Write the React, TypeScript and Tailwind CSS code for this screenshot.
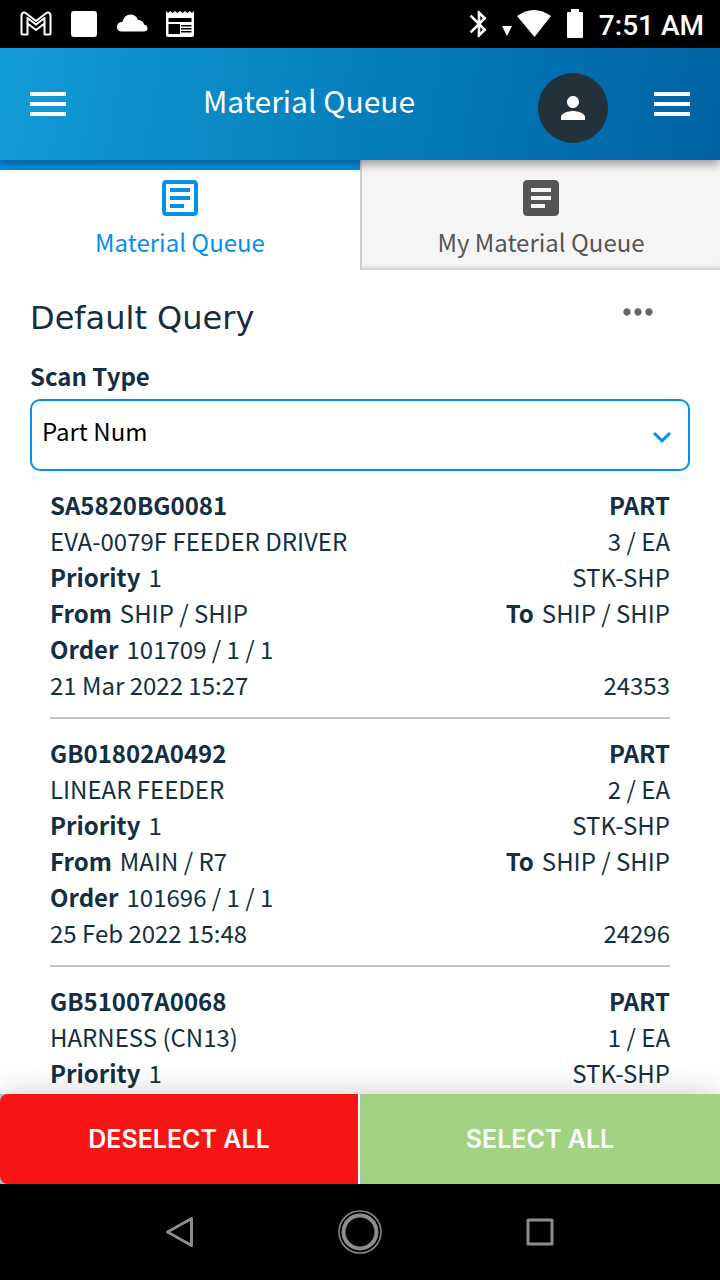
import { useState } from "react";
import {
  MdArticle,
  MdBluetooth,
  MdExpandMore,
  MdMenu,
  MdMoreHoriz,
  MdOutlineArticle,
  MdPerson,
} from "react-icons/md";

type QueueItem = {
  part: string;
  description: string;
  priority: number;
  kind: string;
  quantity: string;
  transaction: string;
  from?: string;
  to?: string;
  order?: string;
  date?: string;
  id?: string;
};

const ITEMS: QueueItem[] = [
  {
    part: "SA5820BG0081",
    description: "EVA-0079F FEEDER DRIVER",
    priority: 1,
    kind: "PART",
    quantity: "3 / EA",
    transaction: "STK-SHP",
    from: "SHIP / SHIP",
    to: "SHIP / SHIP",
    order: "101709 / 1 / 1",
    date: "21 Mar 2022 15:27",
    id: "24353",
  },
  {
    part: "GB01802A0492",
    description: "LINEAR FEEDER",
    priority: 1,
    kind: "PART",
    quantity: "2 / EA",
    transaction: "STK-SHP",
    from: "MAIN / R7",
    to: "SHIP / SHIP",
    order: "101696 / 1 / 1",
    date: "25 Feb 2022 15:48",
    id: "24296",
  },
  {
    part: "GB51007A0068",
    description: "HARNESS (CN13)",
    priority: 1,
    kind: "PART",
    quantity: "1 / EA",
    transaction: "STK-SHP",
  },
];

function StatusBar() {
  return (
    <div className="flex h-12 shrink-0 items-center bg-black px-4 text-white">
      <div className="flex flex-1 items-center gap-4 pl-1">
        <svg className="h-8 w-8" viewBox="0 0 32 32" fill="none" stroke="currentColor" strokeWidth="2" strokeLinejoin="round">
          <path d="M1.500 8Q1.500 4.500 4 4.500Q5 4.500 6 5.300L16 13L26 5.300Q27 4.500 28 4.500Q30.500 4.500 30.500 8V25Q30.500 26.500 29 26.500H24.500V15.500L16 22L7.500 15.500V26.500H3Q1.500 26.500 1.500 25Z" />
          <path d="M7.500 15.500V10L16 16.500L24.500 10V15.500" />
        </svg>
        <svg className="h-8 w-8" viewBox="0 0 32 32" fill="currentColor">
          <rect x="3" y="3" width="26" height="26" rx="3" />
        </svg>
        <svg className="h-8 w-8" viewBox="0 0 32 32" fill="currentColor">
          <path d="M5 23.500A4.700 4.700 0 0 1 1 18.500Q1 14.500 6.500 13.800Q8.500 6.500 14.500 6.500Q20 6.500 22 12Q27 12 28 16.500Q31.500 17 31.500 20.500Q31.500 23.500 28 23.500Z" />
        </svg>
        <svg className="h-8 w-8" viewBox="0 0 32 32">
          <path fill="currentColor" fillRule="evenodd" d="M2 3L4 5L6 3L8.500 5L11 3L13.500 5L16 3L18.500 5L21 3L23.500 5L26 3L28 5L30 3V27Q30 29 28 29H4Q2 29 2 27ZM4.500 10V14H27.500V10ZM4.500 16V26H16V16ZM17 17V18.500H27.500V17ZM17 20V21.500H27.500V20ZM17 23V24.500H27.500V23Z" />
        </svg>
      </div>
      <MdBluetooth className="mr-2 size-8" />
      <svg className="h-8 w-12 overflow-visible" viewBox="0 0 48 32" fill="currentColor">
        <path d="M-1 18H9L4 28Z" />
        <path d="M14 8Q31 -4 48 8L31.500 29Z" />
      </svg>
      <svg className="mx-3.5 h-8 w-5" viewBox="0 0 20 32" fill="currentColor">
        <path d="M6 1H14V4H17Q18 4 18 5V29Q18 30 17 30H3Q2 30 2 29V5Q2 4 3 4H6Z" />
      </svg>
      <span className="pt-1 font-[Roboto,sans-serif] text-[28px] leading-8 font-medium">7:51 AM</span>
    </div>
  );
}

function Header() {
  return (
    <header className="relative z-10 flex h-28 shrink-0 items-center bg-linear-100 from-[#129cd8] to-[#0062a3] px-6 text-white shadow-[0_4px_10px_rgba(0,0,0,0.4)]">
      <button type="button" aria-label="Open menu">
        <MdMenu className="size-12" />
      </button>
      <h1 className="flex-1 pb-2 pl-2 text-center text-[30px] leading-10">Material Queue</h1>
      <button
        type="button"
        aria-label="Account"
        className="mt-2 mr-10 flex size-[70px] items-center justify-center rounded-full bg-[#22313a]"
      >
        <MdPerson className="size-9" />
      </button>
      <button type="button" aria-label="More options">
        <MdMenu className="size-12" />
      </button>
    </header>
  );
}

function Row({ left, right }: { left: React.ReactNode; right?: React.ReactNode }) {
  return (
    <div className="flex h-9 items-center justify-between">
      <span>{left}</span>
      <span>{right}</span>
    </div>
  );
}

function Labelled({ label, value }: { label: string; value: string | number }) {
  return (
    <>
      <b className="mr-2">{label}</b>
      {value}
    </>
  );
}

function QueueCard({ item }: { item: QueueItem }) {
  return (
    <li className="border-b-2 border-[#c4c4c4] pt-4 pb-[14px]">
      <Row left={<b>{item.part}</b>} right={<b>{item.kind}</b>} />
      <Row left={item.description} right={item.quantity} />
      <Row left={<Labelled label="Priority" value={item.priority} />} right={item.transaction} />
      {item.from && item.to && (
        <Row left={<Labelled label="From" value={item.from} />} right={<Labelled label="To" value={item.to} />} />
      )}
      {item.order && <Row left={<Labelled label="Order" value={item.order} />} />}
      {item.date && <Row left={item.date} right={item.id} />}
    </li>
  );
}

export default function App() {
  const [tab, setTab] = useState("all");
  const [scanType, setScanType] = useState("part");

  const activeTab = "border-t-[10px] border-[#0390e8] bg-white pt-1 text-[#0390e8]";
  const idleTab = "border-l-2 border-[#d0d0d0] bg-[#f5f5f5] pt-[14px] text-[#555] shadow-[inset_0_-6px_4px_-4px_rgba(0,0,0,0.2)]";

  return (
    <div className="flex h-screen flex-col bg-white font-['Noto_Sans_CJK_SC','Noto_Sans',sans-serif] text-[24px] leading-9 text-[#132f41]">
      <StatusBar />
      <Header />

      <nav className="grid h-[110px] shrink-0 grid-cols-2">
        <button
          type="button"
          onClick={() => setTab("all")}
          className={`flex flex-col items-center ${tab === "all" ? activeTab : idleTab}`}
        >
          <MdOutlineArticle className="size-12 shrink-0" />
          <span className="leading-10">Material Queue</span>
        </button>
        <button
          type="button"
          onClick={() => setTab("mine")}
          className={`flex flex-col items-center ${tab === "mine" ? activeTab : idleTab}`}
        >
          <MdArticle className="size-12 shrink-0" />
          <span className="leading-10">My Material Queue</span>
        </button>
      </nav>

      <main className="min-h-0 flex-1 overflow-hidden px-[30px] pt-5">
        <div className="flex items-start justify-between pr-[30px]">
          <h2 className="pt-2 font-['DejaVu_Sans',sans-serif] text-[32px] leading-10">Default Query</h2>
          <button type="button" aria-label="Query options" className="text-[#666]">
            <MdMoreHoriz className="size-11" />
          </button>
        </div>

        <label htmlFor="scan-type" className="mt-5 block pb-[5px] font-bold">
          Scan Type
        </label>
        <div className="relative">
          <select
            id="scan-type"
            value={scanType}
            onChange={(e) => setScanType(e.target.value)}
            className="block h-[72px] w-full appearance-none rounded-[10px] border-2 border-[#0390e8] bg-white px-[10px] pb-2 text-black"
          >
            <option value="part">Part Num</option>
            <option value="order">Order Num</option>
          </select>
          <MdExpandMore className="pointer-events-none absolute top-5 right-[10px] size-9 text-[#0390e8]" />
        </div>

        <ul className="px-5">
          {ITEMS.map((item) => (
            <QueueCard key={item.part} item={item} />
          ))}
        </ul>
      </main>

      <div className="relative z-10 grid h-[90px] shrink-0 grid-cols-2 bg-[#b8b8b8] font-[Inter,sans-serif] text-[25px] font-semibold text-white shadow-[0_0_30px_rgba(0,0,0,0.2)]">
        <div className="border-r-2 border-white">
          <button type="button" className="h-full w-full rounded-l-lg bg-[#f61414]">
            DESELECT ALL
          </button>
        </div>
        <button type="button" className="rounded-l-lg bg-[#a3d284]">
          SELECT ALL
        </button>
      </div>

      <div className="flex h-24 shrink-0 items-center justify-center gap-[136px] bg-black text-[#8c8c8c]">
        <button type="button" aria-label="Back">
          <svg className="size-11" viewBox="0 0 44 44" fill="none" stroke="currentColor" strokeWidth="3" strokeLinejoin="round">
            <path d="M33.500 8.500V35.500L9.500 22Z" />
          </svg>
        </button>
        <button type="button" aria-label="Home">
          <svg className="size-11" viewBox="0 0 44 44" fill="none" stroke="currentColor">
            <circle cx="22" cy="22" r="21" strokeWidth="1.500" />
            <circle cx="22" cy="22" r="16.500" strokeWidth="4" />
          </svg>
        </button>
        <button type="button" aria-label="Recent apps">
          <svg className="size-11" viewBox="0 0 44 44" fill="none" stroke="currentColor" strokeWidth="3" strokeLinejoin="round">
            <rect x="10" y="10" width="24" height="24" />
          </svg>
        </button>
      </div>
    </div>
  );
}
